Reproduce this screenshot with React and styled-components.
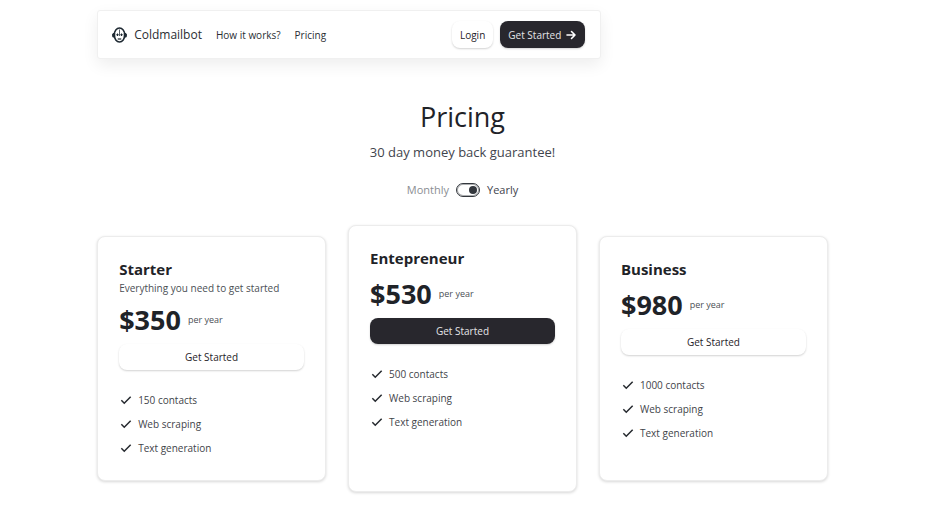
import React, { useState } from 'react';
import styled, { createGlobalStyle } from 'styled-components';

const GlobalStyle = createGlobalStyle`
    *, *::before, *::after {
        box-sizing: border-box;
    }
    body {
        margin: 0;
        background: #fff;
        color: #1f2328;
        font-family: "Open Sans", "Noto Sans", sans-serif;
        font-size: 10px;
    }
    h1, h2, p, ul {
        margin: 0;
        padding: 0;
    }
`;

const Page = styled.div`
    width: 79%;
    max-width: 960px;
    margin: 0 auto;
    padding: 10px 0 28px;
`;

const Navbar = styled.header`
    display: flex;
    align-items: center;
    width: 69%;
    min-width: 480px;
    padding: 10px 15px 10px 14px;
    background: #fff;
    border: 1px solid #f0f0f0;
    border-radius: 3px;
    box-shadow: 0 6px 16px rgba(0, 0, 0, .07);
`;

const Brand = styled.a`
    display: flex;
    align-items: center;
    gap: 7px;
    margin-right: 14px;
    color: #2a2e33;
    font-size: 12px;
    text-decoration: none;
`;

const NavLinks = styled.nav`
    display: flex;
    gap: 14px;
    flex: 1;
`;

const NavLink = styled.a`
    color: #2a2e33;
    text-decoration: none;
`;

const NavActions = styled.div`
    display: flex;
    gap: 7px;
`;

const Button = styled.button`
    display: flex;
    align-items: center;
    justify-content: center;
    gap: 4px;
    width: ${props => props.$block ? '100%' : 'auto'};
    height: ${props => props.$block ? '26px' : '27px'};
    padding: 0 8px;
    border: 0;
    border-radius: 8px;
    background: ${props => props.$dark ? '#28272d' : '#fff'};
    color: ${props => props.$dark ? '#e4e4e7' : '#1f2328'};
    font: inherit;
    line-height: 16px;
    box-shadow: 0 1px 2px rgba(0, 0, 0, .18);
    cursor: pointer;
`;

const Hero = styled.section`
    display: flex;
    flex-direction: column;
    align-items: center;
    padding: 38px 0 25px;
    text-align: center;
`;

const Title = styled.h1`
    font-size: 27px;
    font-weight: 400;
    line-height: 40px;
`;

const Subtitle = styled.p`
    margin-top: 5px;
    color: #3f444d;
    font-size: 13px;
    line-height: 20px;
`;

const Period = styled.label`
    display: flex;
    align-items: center;
    gap: 7px;
    margin-top: 18px;
    font-size: 11px;
    line-height: 20px;
    cursor: pointer;
`;

const PeriodName = styled.span`
    color: ${props => props.$active ? '#3f444d' : '#8b8e93'};
`;

const Toggle = styled.input`
    appearance: none;
    display: flex;
    align-items: center;
    justify-content: flex-start;
    width: 24px;
    height: 14px;
    margin: 0;
    padding: 0 2px;
    border: 1px solid #33373d;
    border-radius: 7px;
    box-shadow: inset 0 0 0 1px rgba(51, 55, 61, .4);
    cursor: pointer;

    &::before {
        content: '';
        width: 8px;
        height: 8px;
        border-radius: 50%;
        background: #33373d;
    }
    &:checked {
        justify-content: flex-end;
    }
`;

const Plans = styled.main`
    display: grid;
    grid-template-columns: repeat(3, 1fr);
    gap: 22px;
`;

const Card = styled.article`
    margin: ${props => props.$featured ? '0' : '11px 0'};
    padding: 20px 21px;
    background: #fff;
    border: 1px solid #ececec;
    border-radius: 8px;
    box-shadow: 0 1px 3px rgba(0, 0, 0, .16);
`;

const PlanName = styled.h2`
    font-size: 15px;
    font-weight: 700;
    line-height: 24px;
`;

const PlanInfo = styled.p`
    color: #4b4f55;
    line-height: 15px;
`;

const PriceRow = styled.p`
    display: flex;
    align-items: center;
    gap: 7px;
    color: #4b4f55;
    font-size: 9px;
    line-height: 48px;
`;

const Price = styled.strong`
    color: #1f2328;
    font-size: 27px;
    font-weight: 700;
`;

const Features = styled.ul`
    margin-top: 18px;
    list-style: none;
`;

const Feature = styled.li`
    display: flex;
    align-items: center;
    gap: 5px;
    color: #3f444a;
    line-height: 24px;
`;

const BotLogo = () => (
    <svg width="15" height="16" viewBox="0 0 30 32" fill="none" stroke="#1f2a33" aria-hidden="true">
        <ellipse cx="15" cy="16" rx="10.5" ry="14" strokeWidth="3" />
        <path d="M4 12v9M26 12v9" strokeWidth="5" />
        <path d="M1.5 14v5.5M28.5 14v5.5" strokeWidth="2.5" />
        <path d="M11 13v5M19 13v5M8.500 15.500h5M16.500 15.500h5" strokeWidth="2" />
        <path d="M15 5v13" strokeWidth="1.5" />
        <path d="M11.500 24h7" strokeWidth="2.5" />
    </svg>
);

const ArrowIcon = () => (
    <svg width="12" height="12" viewBox="0 0 24 24" fill="none" stroke="#fff" strokeWidth="3.200" strokeLinecap="round" strokeLinejoin="round" aria-hidden="true">
        <path d="M4 12h16M13 5l7 7-7 7" />
    </svg>
);

const CheckIcon = () => (
    <svg width="14" height="14" viewBox="0 0 24 24" fill="none" stroke="#25292e" strokeWidth="2.600" aria-hidden="true">
        <path d="M4 12.500l5 5L20 6.500" />
    </svg>
);

const plans = [
    {
        name: 'Starter',
        info: 'Everything you need to get started',
        yearly: 350,
        monthly: 35,
        features: ['150 contacts', 'Web scraping', 'Text generation'],
    },
    {
        name: 'Entepreneur',
        yearly: 530,
        monthly: 53,
        featured: true,
        features: ['500 contacts', 'Web scraping', 'Text generation'],
    },
    {
        name: 'Business',
        yearly: 980,
        monthly: 98,
        features: ['1000 contacts', 'Web scraping', 'Text generation'],
    },
];

const Plan = (props) => {
    let { name, info, yearly, monthly, featured, features, isYearly } = props;

    return (
        <Card $featured={featured}>
            <PlanName>{name}</PlanName>
            {info && <PlanInfo>{info}</PlanInfo>}
            <PriceRow>
                <Price>${isYearly ? yearly : monthly}</Price>
                <span>{isYearly ? 'per year' : 'per month'}</span>
            </PriceRow>
            <Button type="button" $block $dark={featured}>Get Started</Button>
            <Features>
                {features.map(feature => (
                    <Feature key={feature}><CheckIcon />{feature}</Feature>
                ))}
            </Features>
        </Card>
    );
};

const App = () => {
    const [isYearly, setIsYearly] = useState(true);

    return (
        <>
            <GlobalStyle />
            <Page>
                <Navbar>
                    <Brand href="#"><BotLogo />Coldmailbot</Brand>
                    <NavLinks>
                        <NavLink href="#how">How it works?</NavLink>
                        <NavLink href="#pricing">Pricing</NavLink>
                    </NavLinks>
                    <NavActions>
                        <Button type="button">Login</Button>
                        <Button type="button" $dark>Get Started <ArrowIcon /></Button>
                    </NavActions>
                </Navbar>
                <Hero id="pricing">
                    <Title>Pricing</Title>
                    <Subtitle>30 day money back guarantee!</Subtitle>
                    <Period>
                        <PeriodName $active={!isYearly}>Monthly</PeriodName>
                        <Toggle
                            type="checkbox"
                            role="switch"
                            checked={isYearly}
                            onChange={e => setIsYearly(e.target.checked)}
                        />
                        <PeriodName $active={isYearly}>Yearly</PeriodName>
                    </Period>
                </Hero>
                <Plans>
                    {plans.map(plan => (
                        <Plan key={plan.name} isYearly={isYearly} {...plan} />
                    ))}
                </Plans>
            </Page>
        </>
    );
};

export default App;
